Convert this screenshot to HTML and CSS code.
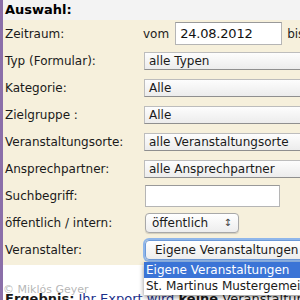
FILE: index.html
```html
<!DOCTYPE html>
<html lang="de">
<head>
    <meta charset="UTF-8">
    <title>Export Auswahl</title>
    <link rel="stylesheet" href="styles.css">
</head>
<body>
<div class="page">
    <div class="bar"></div>
    <div class="main">
        <div class="head">Auswahl:</div>

        <!-- Filter -->
        <div class="form">
            <div class="row">
                <label>Zeitraum:</label>
                <div class="ctl">
                    <span class="word">vom</span>
                    <input class="text date" type="text" value="24.08.2012">
                    <span class="word">bis</span>
                </div>
            </div>
            <div class="row">
                <label>Typ (Formular):</label>
                <div class="ctl"><span class="sel">alle Typen</span></div>
            </div>
            <div class="row">
                <label>Kategorie:</label>
                <div class="ctl"><span class="sel">Alle</span></div>
            </div>
            <div class="row">
                <label>Zielgruppe :</label>
                <div class="ctl"><span class="sel">Alle</span></div>
            </div>
            <div class="row">
                <label>Veranstaltungsorte:</label>
                <div class="ctl"><span class="sel">alle Veranstaltungsorte</span></div>
            </div>
            <div class="row">
                <label>Ansprechpartner:</label>
                <div class="ctl"><span class="sel">alle Ansprechpartner</span></div>
            </div>
            <div class="row">
                <label>Suchbegriff:</label>
                <div class="ctl"><input class="text search" type="text"></div>
            </div>
            <div class="row">
                <label>öffentlich / intern:</label>
                <div class="ctl">
                    <span class="popup">öffentlich <span class="arrows">&#8597;</span></span>
                </div>
            </div>
            <div class="row">
                <label>Veranstalter:</label>
                <div class="ctl drop">
                    <span class="popup wide focus">Eigene Veranstaltungen</span>
                    <ul class="list">
                        <li class="on">Eigene Veranstaltungen</li>
                        <li>St. Martinus Mustergemeinde</li>
                    </ul>
                </div>
            </div>
        </div>

        <p class="result"><b>Ergebnis:</b> <span class="blue">Ihr Export wird</span> <b>keine</b> Veranstaltungen enthalten</p>
        <div class="mark">© Miklós Geyer</div>
    </div>
</div>
</body>
</html>
```

FILE: styles.css
```css
html, body {
    margin: 0;
    padding: 0;
    overflow: hidden;
    background: #fff;
}
body {
    font-family: "DejaVu Sans", Verdana, sans-serif;
    font-size: 12px;
    color: #1a1a1a;
}
.page {
    display: flex;
    width: 300px;
    height: 300px;
}
.bar {
    width: 3px;
    flex: none;
    background: #8b6fa9;
}
.main {
    flex: 1;
    position: relative;
    min-width: 0;
}
.head {
    height: 20px;
    line-height: 20px;
    padding-left: 2px;
    font-weight: bold;
    font-size: 13px;
    color: #000;
    background: #f3f3f3;
}
.form {
    background: #f6f0dc;
    padding-bottom: 2px;
}
.row {
    display: grid;
    grid-template-columns: 140px 1fr;
    align-items: center;
    height: 27px;
}
.row label {
    padding-left: 2px;
    white-space: nowrap;
}
.ctl {
    display: flex;
    align-items: center;
    gap: 5px;
    white-space: nowrap;
}
.word {
    color: #222;
}
.text {
    font-family: "DejaVu Sans", Verdana, sans-serif;
    font-size: 13px;
    box-sizing: border-box;
    height: 23px;
    padding: 1px 4px;
    border: 1px solid #b5b5b5;
    border-top-color: #999;
    background: #fff;
    color: #111;
    outline: none;
}
.date {
    width: 107px;
    margin-left: 1px;
    letter-spacing: -0.2px;
}
.search {
    width: 135px;
    margin-left: 2px;
    height: 22px;
}
.sel {
    box-sizing: border-box;
    display: block;
    width: 190px;
    height: 18px;
    line-height: 16px;
    margin-left: 1px;
    padding-left: 4px;
    border: 1px solid #bdbdbd;
    border-bottom-color: #8f8f8f;
    background: linear-gradient(#fdfdfd, #ececec);
}
.popup {
    box-sizing: border-box;
    display: inline-block;
    position: relative;
    width: 94px;
    height: 20px;
    line-height: 18px;
    margin-left: 2px;
    padding-left: 6px;
    border: 1px solid #a8a8a8;
    border-radius: 4px;
    background: linear-gradient(#ffffff, #ededed);
    box-shadow: 0 1px 1px rgba(0, 0, 0, 0.15);
}
.arrows {
    position: absolute;
    right: 6px;
    top: 0;
    font-size: 10px;
    color: #444;
}
.wide {
    width: 190px;
    padding-left: 9px;
}
.focus {
    border-color: #6d9ad8;
    box-shadow: 0 0 0 2px #8fb6ea;
}
.drop {
    position: relative;
}
.list {
    position: absolute;
    left: 1px;
    top: 22px;
    z-index: 2;
    width: 190px;
    margin: 0;
    padding: 0 0 1px;
    list-style: none;
    background: #fff;
    box-shadow: 0 2px 5px rgba(0, 0, 0, 0.45);
}
.list li {
    height: 16px;
    line-height: 16px;
    padding-left: 2px;
    white-space: nowrap;
}
.list .on {
    background: #3b74d6;
    color: #fff;
}
.result {
    margin: 26px 0 0 2px;
    font-size: 13px;
    white-space: nowrap;
}
.blue {
    color: #1a2f8a;
}
.mark {
    position: absolute;
    left: 0;
    top: 283px;
    font-size: 11px;
    color: rgba(150, 150, 150, 0.7);
}
```
